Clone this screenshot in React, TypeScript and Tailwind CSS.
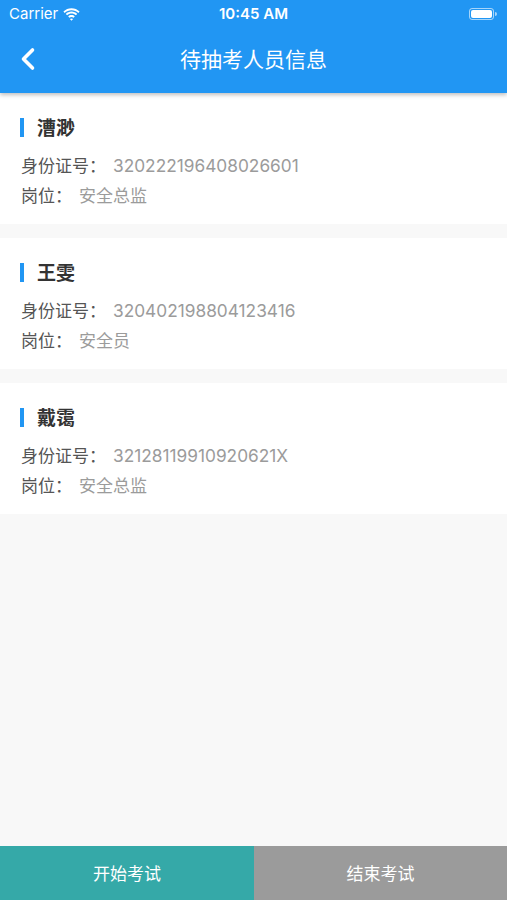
import { ChevronLeft } from "lucide-react";

const people = [
  { name: "漕渺", id: "320222196408026601", post: "安全总监" },
  { name: "王雯", id: "320402198804123416", post: "安全员" },
  { name: "戴霭", id: "32128119910920621X", post: "安全总监" },
];

const font = { fontFamily: '"Noto Sans CJK SC", "Noto Sans", sans-serif' };

function StatusBar() {
  return (
    <div className="h-[25px] pt-[3px] flex items-center justify-between px-[9px] text-white relative">
      <div className="flex items-center gap-[5px] text-[15px]" style={{ fontFamily: "Inter, sans-serif" }}>
        <span>Carrier</span>
        <svg width="17" height="13" viewBox="0 0 17 13" fill="white">
          <path d="M8.5 2.2c2.6 0 5 1 6.8 2.7l1.3-1.4C14.4 1.4 11.6.2 8.5.2S2.6 1.4.4 3.5l1.3 1.4C3.5 3.2 5.9 2.2 8.5 2.2z" />
          <path d="M8.5 5.6c1.7 0 3.2.6 4.4 1.7l1.3-1.4C12.7 4.5 10.7 3.6 8.5 3.6S4.3 4.5 2.8 5.9l1.3 1.4c1.2-1.1 2.7-1.7 4.4-1.7z" />
          <path d="M8.5 9c.8 0 1.5.3 2 .8l1.3-1.4c-.9-.8-2-1.3-3.3-1.3s-2.4.5-3.3 1.3l1.3 1.4c.5-.5 1.2-.8 2-.8zM8.5 12.8l1.6-1.7c-.4-.4-1-.6-1.6-.6s-1.2.2-1.6.6z" />
        </svg>
      </div>
      <div className="absolute left-0 right-0 text-center text-[15px] font-semibold pointer-events-none" style={{ fontFamily: "Inter, sans-serif" }}>
        10:45 AM
      </div>
      <div className="flex items-center mr-[1px]">
        <div className="w-[25px] h-[12px] rounded-[3px] border border-white/60 p-[1px]">
          <div className="w-full h-full bg-white rounded-[2px]" />
        </div>
        <div className="w-[2px] h-[4px] bg-white/60 rounded-r-sm ml-[1px]" />
      </div>
    </div>
  );
}

function PersonCard({ name, id, post }: { name: string; id: string; post: string }) {
  return (
    <div className="bg-white px-[21px] pt-[19px] pb-[14px]">
      <div className="flex items-center h-[30px]">
        <div className="w-[4px] h-[19px] bg-[#2196f3] ml-[-1px]" />
        <div className="ml-[13px] text-[19px] font-bold text-[#333333]">{name}</div>
      </div>
      <div className="flex items-center h-[30px] mt-[8px] text-[17px]">
        <span className="text-[#555555]">身份证号：</span>
        <span className="ml-[7px] text-[#9b9b9b] text-[17.3px] pt-[1px]" style={{ fontFamily: "Inter, sans-serif" }}>
          {id}
        </span>
      </div>
      <div className="flex items-center h-[30px] text-[17px]">
        <span className="text-[#555555]">岗位：</span>
        <span className="ml-[7px] text-[#9b9b9b]">{post}</span>
      </div>
    </div>
  );
}

export default function App() {
  return (
    <div className="w-[507px] h-[900px] bg-[#f8f8f8] flex flex-col overflow-hidden" style={font}>
      <div className="bg-[#2196f3] shadow-[0_2px_4px_rgba(0,0,0,0.25)] z-10">
        <StatusBar />
        <div className="h-[68px] flex items-center relative">
          <ChevronLeft className="absolute left-[10px] text-white" size={36} strokeWidth={2.4} />
          <div className="w-full text-center text-white text-[21px]">待抽考人员信息</div>
        </div>
      </div>

      <div className="flex-1 flex flex-col gap-[14px]">
        {people.map((p) => (
          <PersonCard key={p.id} {...p} />
        ))}
      </div>

      <div className="h-[54px] flex text-white text-[17px]">
        <button className="w-[254px] bg-[#35a9a8]">开始考试</button>
        <button className="flex-1 bg-[#9b9b9b]">结束考试</button>
      </div>
    </div>
  );
}
